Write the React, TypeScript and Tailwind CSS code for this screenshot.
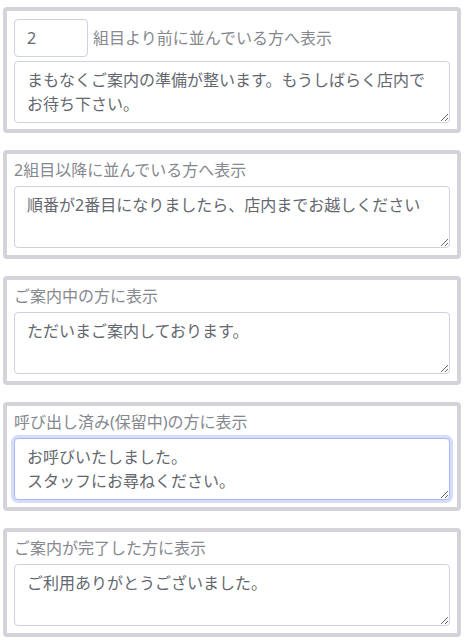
import React from 'react';

const font = {
  fontFamily: '"Noto Sans", "Noto Sans CJK JP", sans-serif',
};

interface MessageCardProps {
  label: string;
  value: string;
  focused?: boolean;
}

function MessageCard({ label, value, focused = false }: MessageCardProps) {
  return (
    <div className="rounded-[4px] border-4 border-[#d2d4da] bg-white px-[7px] pb-[7px] pt-[4px]">
      <div className="mb-[4px] h-6 text-[16px] leading-6 text-[#85888e]">{label}</div>
      <textarea
        defaultValue={value}
        className={`block h-[62px] w-full rounded-[4px] border bg-white px-3 py-[6px] text-[16px] leading-6 text-[#64686e] outline-none ${
          focused
            ? 'border-[#a9b9f3] shadow-[0_0_0_3px_#d5ddfb]'
            : 'border-[#ced1de]'
        }`}
        style={font}
      />
    </div>
  );
}

export default function App() {
  return (
    <div className="min-h-[642px] bg-white pl-[3px] pt-[7px]" style={font}>
      <div className="flex w-[458px] flex-col gap-[17px]">
        <div className="rounded-[4px] border-4 border-[#d2d4da] bg-white px-[7px] pb-[6px] pt-[8px]">
          <div className="mb-[4px] flex items-center gap-[5px]">
            <input
              type="text"
              defaultValue="2"
              className="h-[38px] w-[74px] rounded-[4px] border border-[#ced1de] bg-white px-3 text-[16px] text-[#64686e] outline-none"
              style={font}
            />
            <span className="text-[16px] leading-6 text-[#85888e]">組目より前に並んでいる方へ表示</span>
          </div>
          <textarea
            defaultValue="まもなくご案内の準備が整います。もうしばらく店内でお待ち下さい。"
            className="block h-[62px] w-full rounded-[4px] border border-[#ced1de] bg-white px-3 py-[6px] text-[16px] leading-6 text-[#64686e] outline-none"
            style={font}
          />
        </div>
        <MessageCard
          label="2組目以降に並んでいる方へ表示"
          value="順番が2番目になりましたら、店内までお越しください"
        />
        <MessageCard label="ご案内中の方に表示" value="ただいまご案内しております。" />
        <MessageCard
          label="呼び出し済み(保留中)の方に表示"
          value={'お呼びいたしました。\nスタッフにお尋ねください。'}
          focused
        />
        <MessageCard label="ご案内が完了した方に表示" value="ご利用ありがとうございました。" />
      </div>
    </div>
  );
}
